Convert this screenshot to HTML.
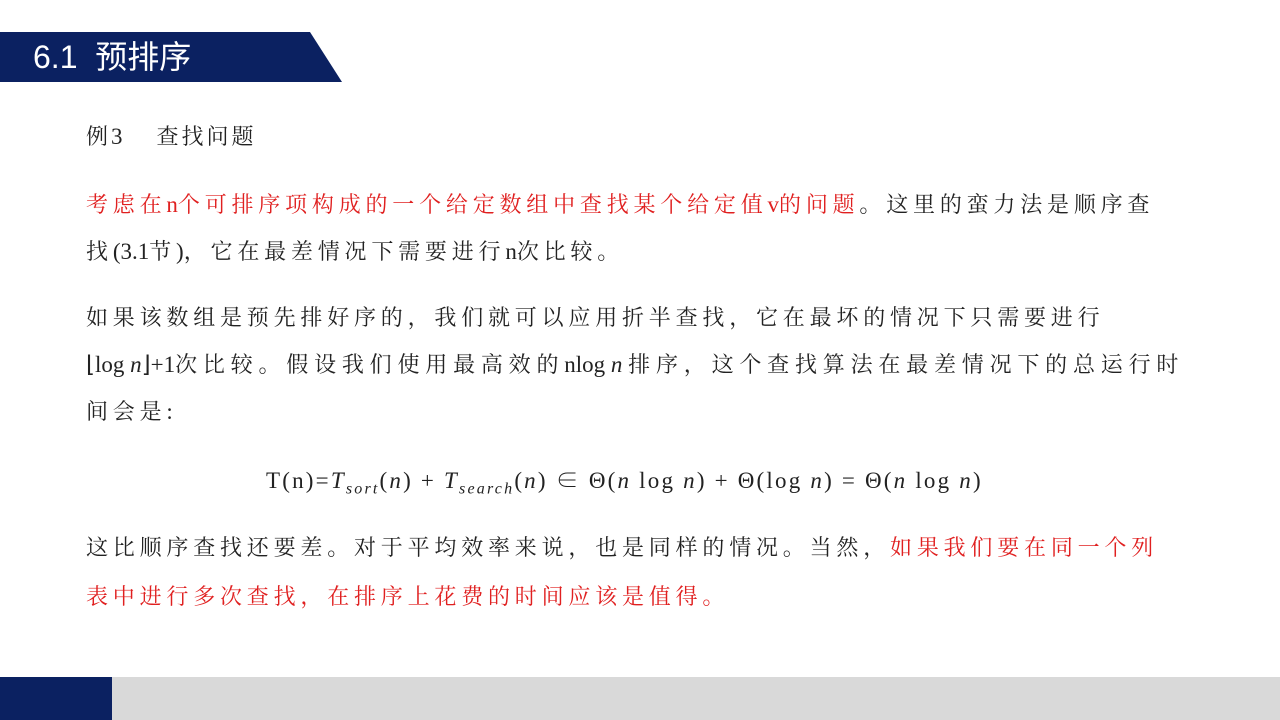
<!DOCTYPE html>
<html><head><meta charset="utf-8"><style>
body{margin:0;width:1280px;height:720px;position:relative;background:#fff;overflow:hidden;font-family:"Liberation Serif","Noto Serif CJK SC",serif;color:#222}
.t{position:absolute;left:86px;font-size:22px;white-space:nowrap;line-height:30px;letter-spacing:4.8px}
.r{color:#e02020}
.l{letter-spacing:0;font-size:23px}
i{font-style:italic}
</style></head><body>
<svg style="position:absolute;left:0;top:0" width="1280" height="720">
<polygon points="0,32 310,32 342,82 0,82" fill="#0b2161"/>
<rect x="0" y="677" width="112" height="43" fill="#0b2161"/>
<rect x="112" y="677" width="1168" height="43" fill="#d9d9d9"/>
</svg>
<div style="position:absolute;left:33px;top:37px;color:#fff;font-size:32px;font-family:'Liberation Sans','Noto Sans CJK SC',sans-serif;line-height:40px">6.1&nbsp; 预排序</div>
<div class="t" style="top:122px;letter-spacing:3px">例<span class="l">3</span>&nbsp;&nbsp;&nbsp; 查找问题</div>
<div class="t" style="top:190px"><span class="r">考虑在<span class="l">n</span>个可排序项构成的一个给定数组中查找某个给定值<span class="l">v</span>的问题</span>。这里的蛮力法是顺序查</div>
<div class="t" style="top:237px">找<span class="l">(3.1</span>节<span class="l">)</span>，它在最差情况下需要进行<span class="l">n</span>次比较。</div>
<div class="t" style="top:303px">如果该数组是预先排好序的，我们就可以应用折半查找，它在最坏的情况下只需要进行</div>
<div class="t" style="top:350px;letter-spacing:5.8px"><span class="l">⌊log <i>n</i>⌋+1</span>次比较。假设我们使用最高效的<span class="l">nlog <i>n</i> </span>排序，这个查找算法在最差情况下的总运行时</div>
<div class="t" style="top:397px">间会是<span class="l">:</span></div>
<div class="t" style="top:466px;left:266px;letter-spacing:2.2px;font-size:23px">T(n)=<i>T<sub style="font-size:16px">sort</sub></i>(<i>n</i>) + <i>T<sub style="font-size:16px">search</sub></i>(<i>n</i>) ∈ Θ(<i>n</i> log <i>n</i>) + Θ(log <i>n</i>) = Θ(<i>n</i> log <i>n</i>)</div>
<div class="t" style="top:533px">这比顺序查找还要差。对于平均效率来说，也是同样的情况。当然，<span class="r">如果我们要在同一个列</span></div>
<div class="t r" style="top:582px">表中进行多次查找，在排序上花费的时间应该是值得。</div>
</body></html>
